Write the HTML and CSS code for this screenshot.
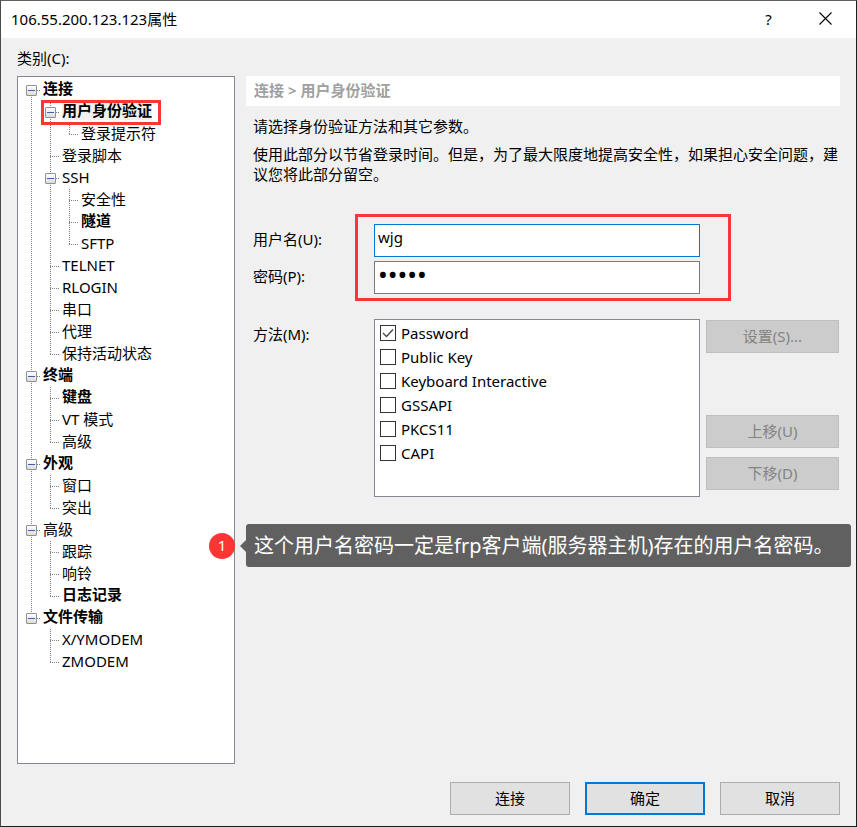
FILE: index.html
```html
<!DOCTYPE html>
<html lang="zh-CN">
<head>
<meta charset="utf-8">
<meta name="viewport" content="width=device-width, initial-scale=1">
<title>106.55.200.123.123属性</title>
<link rel="stylesheet" href="styles.css">
</head>
<body>
<div class="window">
  <header class="titlebar">
    <h1 class="title">106.55.200.123.123属性</h1>
    <button class="title-button" type="button" aria-label="帮助">?</button>
    <button class="title-button" type="button" aria-label="关闭">
      <svg width="13" height="13" viewBox="0 0 13 13" aria-hidden="true"><path d="M.5.5l12 12M12.500.5l-12 12" fill="none" stroke="#000" stroke-width="1.100"/></svg>
    </button>
  </header>

  <h2 class="category" id="category">类别(C):</h2>

  <main class="main">
    <nav class="tree" aria-labelledby="category">
      <ul class="branch">
        <li class="node"><div class="row bold"><button class="toggle" type="button" aria-label="折叠"></button><span class="label">连接</span></div>
          <ul class="branch">
            <li class="node"><div class="row bold marked"><button class="toggle" type="button" aria-label="折叠"></button><span class="label selected">用户身份验证</span></div>
              <ul class="branch">
                <li class="node"><div class="row"><span class="label">登录提示符</span></div></li>
              </ul>
            </li>
            <li class="node"><div class="row"><span class="label">登录脚本</span></div></li>
            <li class="node"><div class="row"><button class="toggle" type="button" aria-label="折叠"></button><span class="label">SSH</span></div>
              <ul class="branch">
                <li class="node"><div class="row"><span class="label">安全性</span></div></li>
                <li class="node"><div class="row bold"><span class="label">隧道</span></div></li>
                <li class="node"><div class="row"><span class="label">SFTP</span></div></li>
              </ul>
            </li>
            <li class="node"><div class="row"><span class="label">TELNET</span></div></li>
            <li class="node"><div class="row"><span class="label">RLOGIN</span></div></li>
            <li class="node"><div class="row"><span class="label">串口</span></div></li>
            <li class="node"><div class="row"><span class="label">代理</span></div></li>
            <li class="node"><div class="row"><span class="label">保持活动状态</span></div></li>
          </ul>
        </li>
        <li class="node"><div class="row bold"><button class="toggle" type="button" aria-label="折叠"></button><span class="label">终端</span></div>
          <ul class="branch">
            <li class="node"><div class="row bold"><span class="label">键盘</span></div></li>
            <li class="node"><div class="row"><span class="label">VT 模式</span></div></li>
            <li class="node"><div class="row"><span class="label">高级</span></div></li>
          </ul>
        </li>
        <li class="node"><div class="row bold"><button class="toggle" type="button" aria-label="折叠"></button><span class="label">外观</span></div>
          <ul class="branch">
            <li class="node"><div class="row"><span class="label">窗口</span></div></li>
            <li class="node"><div class="row"><span class="label">突出</span></div></li>
          </ul>
        </li>
        <li class="node"><div class="row"><button class="toggle" type="button" aria-label="折叠"></button><span class="label">高级</span></div>
          <ul class="branch">
            <li class="node"><div class="row"><span class="label">跟踪</span></div></li>
            <li class="node"><div class="row"><span class="label">响铃</span></div></li>
            <li class="node"><div class="row bold"><span class="label">日志记录</span></div></li>
          </ul>
        </li>
        <li class="node"><div class="row bold"><button class="toggle" type="button" aria-label="折叠"></button><span class="label">文件传输</span></div>
          <ul class="branch">
            <li class="node"><div class="row"><span class="label">X/YMODEM</span></div></li>
            <li class="node"><div class="row"><span class="label">ZMODEM</span></div></li>
          </ul>
        </li>
      </ul>
    </nav>

    <section class="panel">
      <h2 class="crumbs">连接 &gt; 用户身份验证</h2>
      <div class="content">
        <p class="intro">请选择身份验证方法和其它参数。</p>
        <p class="intro">使用此部分以节省登录时间。但是，为了最大限度地提高安全性，如果担心安全问题，建议您将此部分留空。</p>

        <form class="form">
          <div class="labels">
            <label class="field-label" for="user">用户名(U):</label>
            <label class="field-label" for="pass">密码(P):</label>
          </div>
          <div class="credentials">
            <input class="field focused" id="user" type="text" value="wjg">
            <input class="field password" id="pass" type="password" value="12345">
          </div>

          <span class="method-label" id="method">方法(M):</span>
          <div class="methods" role="group" aria-labelledby="method">
            <label class="method"><input class="check" type="checkbox" checked><span class="method-name">Password</span></label>
            <label class="method"><input class="check" type="checkbox"><span class="method-name">Public Key</span></label>
            <label class="method"><input class="check" type="checkbox"><span class="method-name">Keyboard Interactive</span></label>
            <label class="method"><input class="check" type="checkbox"><span class="method-name">GSSAPI</span></label>
            <label class="method"><input class="check" type="checkbox"><span class="method-name">PKCS11</span></label>
            <label class="method"><input class="check" type="checkbox"><span class="method-name">CAPI</span></label>
          </div>
          <div class="side">
            <button class="button settings" type="button" disabled>设置(S)...</button>
            <button class="button" type="button" disabled>上移(U)</button>
            <button class="button" type="button" disabled>下移(D)</button>
          </div>
        </form>
      </div>

      <aside class="callout">
        <span class="number">1</span>
        <p class="bubble">这个用户名密码一定是frp客户端(服务器主机)存在的用户名密码。</p>
      </aside>
    </section>
  </main>

  <footer class="footer">
    <button class="button" type="button">连接</button>
    <button class="button primary" type="button">确定</button>
    <button class="button" type="button">取消</button>
  </footer>
</div>
</body>
</html>
```
FILE: styles.css
```css
* {
  box-sizing: border-box;
}

body,
h1,
h2,
p,
ul {
  margin: 0;
  padding: 0;
}

body,
button,
input {
  font-family: "Noto Sans", "Noto Sans CJK SC", sans-serif;
  font-size: 15px;
  line-height: 20px;
  color: #000;
}

.window {
  display: flex;
  flex-direction: column;
  min-height: 100vh;
  border: 1px solid #1c1c1e;
  border-top-color: #606060;
  border-left-color: #4c4a50;
  background: #f0f0f0;
}

/* Title bar */

.titlebar {
  display: flex;
  align-items: center;
  height: 37px;
  padding: 0 2px 2px 10px;
  background: #fff;
}

.title {
  flex: 1;
  font-size: 15px;
  font-weight: 400;
}

.title-button {
  display: flex;
  align-items: center;
  justify-content: center;
  width: 57px;
  height: 35px;
  padding: 0;
  border: 0;
  background: none;
}

.category {
  padding: 10px 16px 8px;
  font-size: 15px;
  font-weight: 400;
}

.main {
  display: flex;
  flex: 1;
  gap: 11px;
  padding: 0 16px;
}

/* Category tree */

.tree {
  flex: none;
  width: 218px;
  padding: 2px 8px;
  border: 1px solid #828790;
  background: #fff;
}

.branch {
  list-style: none;
}

.branch .branch {
  margin-left: 19px;
}

.node {
  background: repeating-linear-gradient(#808080 0 1px, transparent 1px 2px) 5px 0 / 1px 100% no-repeat;
}

.node:last-child {
  background-size: 1px 12px;
}

.tree > .branch > .node:first-child {
  background-position: 5px 12px;
}

.row {
  display: flex;
  align-items: center;
  width: fit-content;
  height: 22px;
  background: repeating-linear-gradient(90deg, #808080 0 1px, transparent 1px 2px) 5px 11px / 10px 1px no-repeat;
}

.label {
  height: 20px;
  margin: 0 0 2px 17px;
}

.bold {
  font-weight: 700;
}

.bold .label {
  margin-bottom: 4px;
}

.toggle {
  width: 11px;
  height: 11px;
  margin-top: 1px;
  padding: 0;
  border: 1px solid #919191;
  border-radius: 1px;
  background:
    linear-gradient(#3f5fae, #3f5fae) center / 7px 1px no-repeat,
    linear-gradient(#fff, #dcdcdc);
}

.toggle + .label {
  margin-left: 6px;
}

.selected {
  background: #f0f0f0;
}

.marked {
  position: relative;
}

.marked::after {
  content: "";
  position: absolute;
  inset: -1px -9px -2px -4px;
  border: 3px solid #fc3535;
}

/* Settings panel */

.panel {
  position: relative;
  flex: 1;
  min-width: 0;
}

.crumbs {
  padding: 4px 8px 6px;
  background: #fff;
  color: #a0a0a0;
  font-size: 15px;
  font-weight: 700;
}

.content {
  padding: 10px 1px 0 7px;
}

.intro {
  margin-bottom: 8px;
}

.form {
  display: grid;
  grid-template-columns: 121px 1fr 139px;
  row-gap: 25px;
  margin-top: 40px;
}

.form > .labels,
.form > .credentials {
  display: flex;
  flex-direction: column;
  gap: 4px;
}

.field-label {
  height: 33px;
  padding-top: 5px;
}

.credentials {
  position: relative;
}

.credentials::after {
  content: "";
  position: absolute;
  inset: -10px -31px -7px -19px;
  border: 3px solid #fc3535;
  pointer-events: none;
}

.field {
  width: 100%;
  height: 33px;
  padding: 0 4px 7px 3px;
  border: 1px solid #7a7a7a;
  border-radius: 0;
  outline: 0;
  background: #fff;
}

.focused {
  border-color: #0078d7;
}

.password {
  font-size: 26px;
}

.method-label {
  grid-column: 1;
  padding-top: 5px;
}

.methods {
  min-height: 178px;
  padding: 2px 5px;
  border: 1px solid #828790;
  background: #fff;
}

.method {
  display: flex;
  align-items: center;
  gap: 5px;
  height: 24px;
}

.method-name {
  padding-bottom: 2px;
}

.check {
  width: 16px;
  height: 16px;
  margin: 0 0 2px;
  appearance: none;
  border: 1px solid #333;
  background: #fff;
}

.check:checked {
  background: #fff url("data:image/svg+xml,%3Csvg xmlns='http://www.w3.org/2000/svg' viewBox='0 0 14 14'%3E%3Cpath d='M2 7l3.500 3.500 6.500-7' fill='none' stroke='%23444' stroke-width='1.300'/%3E%3C/svg%3E") center / 14px no-repeat;
}

.side {
  display: flex;
  flex-direction: column;
  gap: 9px;
  padding: 1px 0 0 6px;
}

.button {
  width: 120px;
  height: 33px;
  padding: 0 0 2px;
  border: 1px solid #adadad;
  background: #e1e1e1;
}

.side .button {
  width: 133px;
}

.button:disabled {
  border-color: #bfbfbf;
  background: #ccc;
  color: #838383;
}

.settings {
  margin-bottom: 53px;
}

.primary {
  border: 2px solid #0078d7;
}

/* Callout laid over the dialog */

.callout {
  position: absolute;
  top: 448px;
  left: -37px;
  right: -11px;
  display: flex;
  align-items: center;
  gap: 11px;
}

.number {
  flex: none;
  width: 26px;
  height: 26px;
  border-radius: 50%;
  background: #fc3535;
  color: #fff;
  line-height: 24px;
  text-align: center;
}

.bubble {
  position: relative;
  flex: 1;
  padding: 8px 8px 7px;
  border-radius: 3px;
  background: #606060;
  color: #fff;
  font-size: 20px;
  line-height: 28px;
}

.bubble::before {
  content: "";
  position: absolute;
  top: 16px;
  left: -6px;
  border: 6px solid transparent;
  border-left-width: 0;
  border-right-color: #606060;
}

.footer {
  display: flex;
  justify-content: flex-end;
  gap: 15px;
  padding: 18px 16px 11px;
}
```
